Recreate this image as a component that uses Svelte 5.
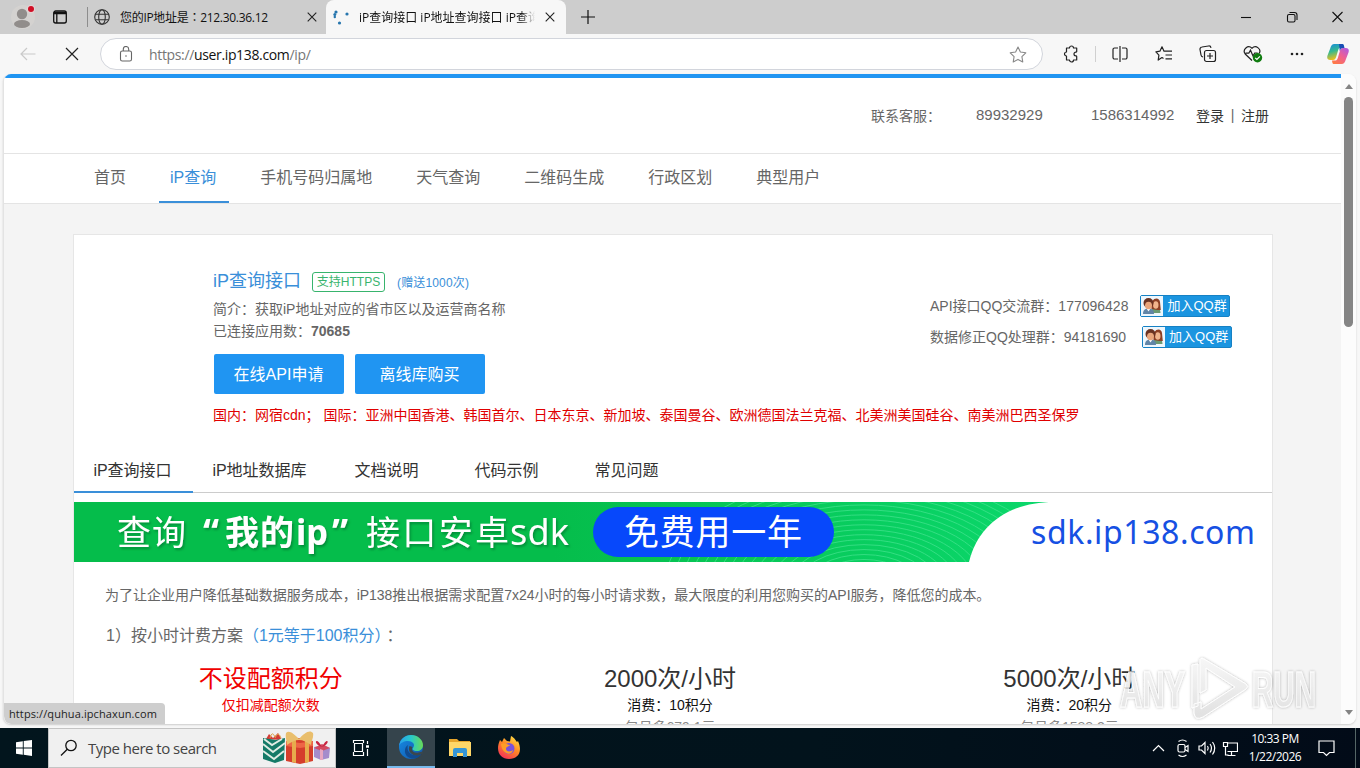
<script>
	const menu = ['首页', 'iP查询', '手机号码归属地', '天气查询', '二维码生成', '行政区划', '典型用户'];
	const tabs = ['iP查询接口', 'iP地址数据库', '文档说明', '代码示例', '常见问题'];
	const groups = [
		{ label: 'API接口QQ交流群：', number: '177096428' },
		{ label: '数据修正QQ处理群：', number: '94181690' }
	];
	const plans = [
		{ name: '不设配额积分', cost: '仅扣减配额次数', price: '', free: true },
		{ name: '2000次/小时', cost: '消费：10积分', price: '包月多679.1元' },
		{ name: '5000次/小时', cost: '消费：20积分', price: '包月多1588.2元' }
	];
	const rings = Array.from({ length: 22 }, (_, i) => 14 + i * 8);
</script>

<div class="window">
	<div class="tabstrip">
		<svg class="avatar" width="30" height="34" viewBox="0 0 30 34">
			<circle cx="15" cy="17" r="12" fill="#d4d2d0" />
			<circle cx="14" cy="14" r="5.2" fill="#918d8b" />
			<ellipse cx="14" cy="24" rx="8" ry="4" fill="#918d8b" />
			<circle cx="23" cy="9" r="4" fill="#e6d3d3" />
			<circle cx="23" cy="9" r="3" fill="#d00f26" />
		</svg>
		<svg class="actions" width="16" height="16" viewBox="0 0 16 16" fill="none" stroke="#111" stroke-width="1.3">
			<rect x="1.7" y="2" width="12.6" height="12" rx="2" />
			<path d="M2 3.3h12M2 4.6h12M4.800 5v9" />
		</svg>
		<i class="sep"></i>
		<div class="tab first">
			<svg width="16" height="16" viewBox="0 0 16 16" fill="none" stroke="#333" stroke-width="1.1">
				<circle cx="8" cy="8" r="7.3" />
				<ellipse cx="8" cy="8" rx="3.3" ry="7.3" />
				<path d="M1.5 5.3h13M1.5 10.7h13" />
			</svg>
			<span class="title">您的IP地址是：212.30.36.12</span>
			<svg class="x" width="10" height="10" viewBox="0 0 10 10" stroke="#222" stroke-width="1.1"><path d="M.7.7l8.6 8.6M9.3.7L.7 9.3" /></svg>
		</div>
		<div class="tab active">
			<svg width="16" height="16" viewBox="0 0 16 16" fill="#2776ae">
				<circle cx="3" cy="3" r="1.6" /><circle cx="1.8" cy="5.5" r="1.5" /><circle cx="1.8" cy="8" r="1.2" />
				<circle cx="14" cy="5" r="1.6" /><circle cx="6.5" cy="14" r="1.6" />
			</svg>
			<span class="title fade">iP查询接口 iP地址查询接口 iP查询</span>
			<svg class="x" width="10" height="10" viewBox="0 0 10 10" stroke="#222" stroke-width="1.1"><path d="M.7.7l8.6 8.6M9.3.7L.7 9.3" /></svg>
		</div>
		<svg class="plus" width="14" height="14" viewBox="0 0 14 14" stroke="#111" stroke-width="1.2"><path d="M7 0v14M0 7h14" /></svg>
		<svg class="controls" width="102" height="12" viewBox="0 0 102 12" fill="none" stroke="#111" stroke-width="1.1">
			<path d="M0 6.5h10" />
			<rect x="46.5" y="3.5" width="7.5" height="7.5" rx="1.5" />
			<path d="M48.5 1.5h5a2.5 2.5 0 0 1 2.5 2.5v5" />
			<path d="M91.5 1l10 10M101.5 1l-10 10" />
		</svg>
	</div>

	<div class="toolbar">
		<svg class="back" width="16" height="14" viewBox="0 0 16 14" fill="none" stroke="#c9c9c9" stroke-width="1.2"><path d="M15.5 7H1M7 1L1 7l6 6" /></svg>
		<svg class="stop" width="14" height="14" viewBox="0 0 14 14" stroke="#222" stroke-width="1.2"><path d="M1 1l12 12M13 1L1 13" /></svg>
		<div class="address">
			<svg width="14" height="16" viewBox="0 0 14 16" fill="none" stroke="#666" stroke-width="1.1">
				<rect x="1.5" y="5" width="11" height="10" rx="1.8" />
				<path d="M4.3 5V3.2a2.7 2.7 0 0 1 5.4 0V5" />
				<circle cx="7" cy="10" r=".8" fill="#666" stroke="none" />
			</svg>
			<span class="url">https://<b>user.ip138.com</b>/ip/</span>
			<svg class="star" width="18" height="17" viewBox="0 0 18 17" fill="none" stroke="#888" stroke-width="1.1" stroke-linejoin="round"><path d="M9 1l2.400 5 5.400.8-3.900 3.800.9 5.400L9 13.400 4.200 16l.9-5.400L1.200 6.800 6.600 6z" /></svg>
		</div>
		<div class="tools">
			<svg width="18" height="18" viewBox="0 0 18 18" fill="none" stroke="#222" stroke-width="1.2" stroke-linejoin="round"><path d="M4.500 3h3a2 2 0 0 1 4 0h3.200v3.500a.8.8 0 0 1-.8.6 1.900 1.900 0 1 0 0 3.800c.5 0 .8.200.8.600V15h-3.200a2 2 0 0 1-4 0H4.500v-4A2 2 0 1 1 4.500 7z" /></svg>
			<i class="bar"></i>
			<svg width="18" height="18" viewBox="0 0 18 18" fill="none" stroke="#222" stroke-width="1.200"><path d="M7 3H3.500A1.500 1.500 0 0 0 2 4.500v8A1.500 1.500 0 0 0 3.500 14H7M11 3h3.500A1.500 1.500 0 0 1 16 4.500v8a1.500 1.500 0 0 1-1.500 1.500H11M9 1v16" /></svg>
			<svg width="18" height="18" viewBox="0 0 18 18" fill="none" stroke="#222" stroke-width="1.200" stroke-linejoin="round"><path d="M10.500 6.200H9L7 1.800 4.900 6.200.9 6.800l3 3.300-.7 5L7 12.600l1.500 1M10.500 6.200H17M10.500 10H17M10.500 13.800H17" /></svg>
			<svg width="18" height="18" viewBox="0 0 18 18" fill="none" stroke="#222" stroke-width="1.200"><path d="M4 12A2.500 2.500 0 0 1 2 10L1 4.500A2.200 2.200 0 0 1 3 2l6.500-1a2.200 2.200 0 0 1 2.500 1.800" /><rect x="5.500" y="5.500" width="11" height="11" rx="2" /><path d="M11 8v6M8 11h6" /></svg>
			<svg width="20" height="18" viewBox="0 0 20 18" fill="none" stroke="#222" stroke-width="1.200">
				<path d="M9 15.500L2.200 9C-1 4.500 5-.7 9 3.200 13-.7 19 4.500 16 8.500M2.500 8.200h3.300L7.500 5.200 10 11l1.700-3h3" />
				<circle cx="14.500" cy="12.800" r="4.700" fill="#107c10" stroke="none" />
				<path d="M12.200 12.800l1.700 1.700 3-3.200" stroke="#fff" />
			</svg>
			<svg width="18" height="18" viewBox="0 0 18 18" fill="#222"><circle cx="3" cy="9" r="1.300" /><circle cx="8" cy="9" r="1.300" /><circle cx="13" cy="9" r="1.300" /></svg>
		</div>
		<svg class="copilot" width="22" height="22" viewBox="0 0 22 22">
			<defs>
				<linearGradient id="cpA" x1="0" y1="0" x2=".3" y2="1"><stop offset="0" stop-color="#1689e0" /><stop offset=".5" stop-color="#35b990" /><stop offset="1" stop-color="#f3bf1b" /></linearGradient>
				<linearGradient id="cpB" x1="1" y1="0" x2=".2" y2="1"><stop offset="0" stop-color="#a85be9" /><stop offset=".5" stop-color="#ee6094" /><stop offset="1" stop-color="#ff7a45" /></linearGradient>
			</defs>
			<path d="M15.500 1H7.500C5 1 3.900 3 3.200 5.500L.5 12.500C-.4 15.600.8 17 3.200 17H6c2 0 2.600-1.200 3.200-3.200l2-6.800C11.900 5 12.500 4.500 14 4.500h3C16.700 2.500 16.400 1 15.500 1z" fill="url(#cpA)" />
			<path d="M6.500 21h8c2.500 0 3.600-2 4.300-4.500l2.700-7c.9-3.100-.3-4.500-2.700-4.500H16c-2 0-2.600 1.200-3.200 3.200l-2 6.800C10.100 17 9.500 17.500 8 17.500H5c.3 2 .6 3.500 1.500 3.500z" fill="url(#cpB)" />
			<path d="M12 1h3.500c1 0 1.500 1.500 2 4H16c-2 0-2.600 1-3.200 3.200z" fill="#184eb5" />
		</svg>
	</div>

	<div class="viewport">
		<div class="page">
			<header>
				<span class="service">联系客服：</span>
				<span class="phone">89932929</span>
				<span class="phone second">1586314992</span>
				<span class="login">登录</span><span class="pipe">|</span><span class="login">注册</span>
			</header>
			<nav>
				{#each menu as item, i}
					<a class:on={i === 1}>{item}</a>
				{/each}
			</nav>
			<main>
				<section class="info">
					<div class="summary">
						<h1><span>iP查询接口</span><span class="badge">支持HTTPS</span><small>(赠送1000次)</small></h1>
						<p>简介：获取iP地址对应的省市区以及运营商名称</p>
						<p>已连接应用数：<b>70685</b></p>
						<div class="buttons"><button>在线API申请</button><button>离线库购买</button></div>
						<p class="nodes">国内：网宿cdn； 国际：亚洲中国香港、韩国首尔、日本东京、新加坡、泰国曼谷、欧洲德国法兰克福、北美洲美国硅谷、南美洲巴西圣保罗</p>
					</div>
					<div class="groups">
						{#each groups as group}
							<div class="group">
								<span>{group.label}{group.number}</span>
								<div class="join">
									<svg width="22" height="20" viewBox="0 0 22 20">
										<rect width="22" height="20" fill="#eef7fd" />
										<path d="M10 17c0-4 2-5.500 5-5.500s4.500 2 4.500 5.500z" fill="#6c9a72" />
										<path d="M10.500 13C8.500 1 18.500 0 19 6l.8 8h-3z" fill="#8c3f24" />
										<ellipse cx="14.800" cy="9" rx="2.700" ry="3.800" fill="#f0b48c" />
										<path d="M2 18c0-4 2-5.500 5.500-5.500S13 14 13 18z" fill="#6185a7" />
										<path d="M5.500 12.500l2 3 2-3z" fill="#fff" />
										<circle cx="7.500" cy="7" r="5" fill="#693222" />
										<ellipse cx="7.500" cy="9.500" rx="3.500" ry="3.800" fill="#e9a67c" />
									</svg>
									<span>加入QQ群</span>
								</div>
							</div>
						{/each}
					</div>
				</section>

				<div class="tabs">
					{#each tabs as tab, i}
						<a class:on={i === 0}>{tab}</a>
					{/each}
				</div>

				<svg class="banner" width="1198" height="60" viewBox="0 0 1198 60">
					<defs>
						<linearGradient id="green"><stop offset=".4" stop-color="#05bd4b" /><stop offset=".82" stop-color="#0bd86c" /></linearGradient>
						<filter id="shade" x="-5%" y="-10%" width="110%" height="130%"><feDropShadow dx="1.500" dy="2" stdDeviation="1" flood-color="#006c2c" flood-opacity=".6" /></filter>
					</defs>
					<rect width="1198" height="60" fill="url(#green)" />
					<g fill="none" stroke="#4be594" stroke-width="1" opacity=".65">
						{#each rings as r}
							<ellipse cx="790" cy="86" rx={r * 1.1} ry={r * 0.62} />
						{/each}
					</g>
					<path d="M895 60C904 22 936 0 980 0h218v60z" fill="#fff" />
					<rect x="519" y="5" width="241" height="50" rx="25" fill="#0748fb" />
					<g fill="#fff" filter="url(#shade)" font-size="34">
						<text x="43" y="43" textLength="69">查询</text>
						<g font-weight="700">
							<text class="latin" x="129" y="43" font-size="36">“</text>
							<text x="151" y="43" textLength="69">我的</text>
							<text class="latin" x="222" y="43" font-size="36" textLength="32" lengthAdjust="spacingAndGlyphs">ip</text>
							<text class="latin" x="258" y="43" font-size="36">”</text>
						</g>
						<text x="292" y="43" textLength="143">接口安卓</text>
						<text class="latin" x="436" y="43" font-size="36" textLength="59">sdk</text>
					</g>
					<text x="550" y="43" font-size="35" fill="#fff" textLength="178">免费用一年</text>
					<text class="latin" x="957" y="42" font-size="32" fill="#1650e3" textLength="224">sdk.ip138.com</text>
				</svg>

				<p class="intro">为了让企业用户降低基础数据服务成本，iP138推出根据需求配置7x24小时的每小时请求数，最大限度的利用您购买的API服务，降低您的成本。</p>
				<p class="scheme">1）按小时计费方案<em>（1元等于100积分）</em>：</p>
				<div class="plans">
					{#each plans as plan}
						<div class="plan" class:free={plan.free}>
							<h2>{plan.name}</h2>
							<p>{plan.cost}</p>
							<p class="price">{plan.price}</p>
						</div>
					{/each}
				</div>
			</main>
		</div>
		<div class="scroll">
			<i class="up"></i>
			<i class="thumb"></i>
			<i class="down"></i>
		</div>
		<div class="status">https://quhua.ipchaxun.com</div>
		<svg class="watermark" width="204" height="70" viewBox="0 0 204 70">
			<defs>
				<linearGradient id="mark" x1="0" y1="0" x2="0" y2="1"><stop offset="0" stop-color="#f6f6f6" /><stop offset="1" stop-color="#dcdcdc" /></linearGradient>
				<filter id="halo" x="-5%" y="-10%" width="110%" height="120%"><feDropShadow dx="0" dy="0" stdDeviation="1.400" flood-color="#000" flood-opacity=".35" /></filter>
			</defs>
			<g class="mark" fill="url(#mark)" stroke="#fff" stroke-width="1" filter="url(#halo)" opacity=".85">
				<text x="4" y="53" textLength="65" lengthAdjust="spacingAndGlyphs">ANY</text>
				<text x="136" y="53" textLength="64" lengthAdjust="spacingAndGlyphs">RUN</text>
				<path d="M76 11l6-1V52l-6 2zM84 7q0-4 4-2l42 25q3 3 0 5L87 63q-8 4-9-4V50l7-2v7l34-22-29-19v22l-6 3z" />
			</g>
		</svg>
	</div>

	<div class="taskbar">
		<div class="start">
			<svg width="16" height="16" viewBox="0 0 16 16" fill="#fff"><path d="M0 2.200L6.800 1.200v6.300H0zM7.700 1.100L16 0v7.500H7.700zM0 8.400h6.800v6.300L0 13.800zM7.700 8.400H16V16l-8.300-1.200z" /></svg>
		</div>
		<div class="search">
			<svg width="18" height="18" viewBox="0 0 18 18" fill="none" stroke="#111" stroke-width="1.300"><circle cx="11" cy="6.500" r="5.200" /><path d="M7.300 10.200L1 16.500" /></svg>
			<span>Type here to search</span>
			<svg class="gifts" width="70" height="36" viewBox="0 0 70 36">
				<path d="M4 9l3-5 4 4 5-5 4 7z" fill="#d23b36" />
				<path d="M8 8q2-8 5-1M13 8q3-8 6 0" fill="none" stroke="#dba34c" />
				<path d="M1 8l13 2 9-2-1 22-9 3-12-4z" fill="#147a67" />
				<path d="M1 14l10 8 12-9M1 21l11 8 10-8M2 9l8 6 10-6" fill="none" stroke="#dfece3" stroke-width="2" />
				<path d="M24 11l13-3 14 3v20l-13 3-14-3z" fill="#d53e2c" />
				<path d="M24 11l14 2 13-2v5l-13 2-14-2z" fill="#ee6646" />
				<path d="M30 9h4v24l-4-1zM43 10h4v22l-4 1z" fill="#e7ac4c" />
				<path d="M37 9C31 3 27 0 24 3c-1 5 1 8 1 12 4-3 8-5 12-5 4 0 8 2 12 5 0-4 3-7 2-12-3-4-9 0-14 6z" fill="#e9be6c" />
				<path d="M52 17l8-2 8 3-1 10-8 2-7-3z" fill="#a58ccb" />
				<path d="M52 18l8-4 8 4-8 3z" fill="#d34a60" />
				<path d="M58 19l3 1v10h-3z" fill="#e8a7c1" />
				<path d="M60 17c-6-12-10-3 0 0 9-3 6-12 0 0z" fill="#c82440" />
			</svg>
		</div>
		<div class="app">
			<svg width="18" height="18" viewBox="0 0 18 18" fill="none" stroke="#fff" stroke-width="1.200"><path d="M1 1.500h10M1 16.500h10M2.500 4.500h8v8h-8zM1.500 1v3M11.500 1v3M1.500 13v4M11.500 13v4M15.500 2v3M15.500 10v7" /><path d="M14 7.500h3" stroke-width="2.500" /></svg>
		</div>
		<div class="app current">
			<svg width="24" height="24" viewBox="0 0 24 24">
				<defs>
					<linearGradient id="edgeTop"><stop offset="0" stop-color="#299eee" /><stop offset=".5" stop-color="#28c9ca" /><stop offset="1" stop-color="#69db55" /></linearGradient>
					<linearGradient id="edgeLow" x1="0" y1="0" x2="1" y2="1"><stop offset="0" stop-color="#178ce5" /><stop offset="1" stop-color="#1055a9" /></linearGradient>
				</defs>
				<circle cx="12" cy="12" r="12" fill="url(#edgeLow)" />
				<path d="M0 11C1 4 6 0 12 0c7 0 12 5 12 10 0 4-3 6-6 6-4 0-5-2-4-3 3-4-1-7-5-7-4 0-8 2-9 5z" fill="url(#edgeTop)" />
				<path d="M9 10c-2 6 3 11 9 10l5-2c-4 8-16 7-17-1-.4-3 1-6 3-7z" fill="#104b91" />
				<path d="M13.500 12c-2 4 2 6.500 6 5.500l4-1 .8 1.500-3.800 2C14 22 8 17 10.500 11z" fill="#3b474d" />
			</svg>
		</div>
		<div class="app">
			<svg width="22" height="20" viewBox="0 0 22 20"><path d="M0 1h8l2 2h11v4H0z" fill="#e7a52b" /><path d="M0 4h22v14H0z" fill="#ffd768" /><path d="M4 12q0-2 2-2h10q2 0 2 2v7h-4v-4H8v4H4z" fill="#3696d5" /></svg>
		</div>
		<div class="app">
			<svg width="24" height="24" viewBox="0 0 24 24">
				<defs><linearGradient id="fox" x1=".8" y1="0" x2=".2" y2="1"><stop offset="0" stop-color="#ffdf45" /><stop offset=".45" stop-color="#ff8b24" /><stop offset="1" stop-color="#f42b59" /></linearGradient></defs>
				<path d="M3 4l2 2 2-4 3 3 3 .5L14 0c4 2 5 5 6 6l1-1c5 11 0 18-9 18S-2 15 3 4z" fill="url(#fox)" />
				<circle cx="12" cy="12.500" r="5.500" fill="#7852db" />
				<path d="M4 8c4-2 6 1 9 1-1 2-4 1-4 4 0 3 5 3 7 1-1 6-11 5-12-6z" fill="#ff9d25" />
			</svg>
		</div>
		<div class="tray">
			<svg width="86" height="20" viewBox="0 0 86 20" fill="none" stroke="#fff" stroke-width="1.200">
				<path d="M1 13l5.500-5.500L12 13" />
				<rect x="26" y="6.500" width="7" height="7.500" rx="1.500" />
				<path d="M33 9.500l3-2v6l-3-2M26.500 3.500q4-3 8 0M26.500 17q4 3 8 0" />
				<path d="M47 8h2.500L53 4.500v11L49.500 12H47zM55.500 8q1.500 2 0 4.500M58 6q3 4 0 8.500M60.500 4q4.500 6 0 12.500" />
				<path d="M75 5h11M85.500 5v8.500H75.500M79.500 14v3.500M75.500 17.500h8M71.500 4.500h4v4h-4zM73.500 8.500v8.500h3" />
			</svg>
			<div class="clock"><span>10:33 PM</span><span>1/22/2026</span></div>
			<svg width="17" height="17" viewBox="0 0 17 17" fill="none" stroke="#fff" stroke-width="1.200"><path d="M1 1h15v11.500h-4.500l-3 3-3-3H1z" /></svg>
			<i class="desk"></i>
		</div>
	</div>
</div>

<style>
	:global(body) {
		margin: 0;
	}
	* {
		box-sizing: border-box;
	}
	svg {
		flex: none;
	}
	p,
	h1,
	h2 {
		margin: 0;
		font-weight: 400;
	}
	.window {
		width: 1360px;
		height: 768px;
		overflow: hidden;
		display: flex;
		flex-direction: column;
		background: #f7f7f7;
		font-family: 'Liberation Sans', 'Noto Sans CJK SC', sans-serif;
		white-space: nowrap;
	}

	.tabstrip {
		height: 34px;
		background: #cdcdcd;
		display: flex;
		align-items: center;
		padding-left: 8px;
		font-family: 'Open Sans', 'Noto Sans CJK TC', sans-serif;
		font-size: 12px;
		color: #111;
	}
	.actions {
		margin-left: 14px;
	}
	.sep {
		width: 1px;
		height: 20px;
		background: #8d8d8d;
		margin-left: 19px;
	}
	.tab {
		height: 34px;
		display: flex;
		align-items: center;
		gap: 10px;
	}
	.first {
		width: 238px;
		padding: 0 9px 0 6px;
	}
	.first .title {
		letter-spacing: -0.3px;
	}
	.active {
		width: 240px;
		padding: 0 11px 0 7px;
		background: #f7f7f7;
		border-radius: 8px 8px 0 0;
	}
	.x {
		margin-left: auto;
	}
	.fade {
		width: 178px;
		overflow: hidden;
		mask-image: linear-gradient(90deg, #000 92%, transparent);
	}
	.plus {
		margin-left: 15px;
	}
	.controls {
		margin: 0 17px 0 auto;
	}

	.toolbar {
		height: 40px;
		display: flex;
		align-items: center;
		background: #f7f7f7;
	}
	.back {
		margin-left: 20px;
	}
	.stop {
		margin-left: 29px;
	}
	.address {
		width: 943px;
		height: 32px;
		margin-left: 21px;
		padding: 0 15px 0 18px;
		display: flex;
		align-items: center;
		background: #fff;
		border: 1px solid #d2d5dc;
		border-radius: 16px;
	}
	.url {
		margin-left: 16px;
		font: 14px 'Open Sans', sans-serif;
		color: #767676;
		letter-spacing: -0.35px;
	}
	.url b {
		font-weight: 400;
		color: #111;
	}
	.star {
		margin-left: auto;
	}
	.tools {
		display: flex;
		align-items: center;
		gap: 26px;
		margin-left: 19px;
	}
	.bar {
		width: 1px;
		height: 16px;
		background: #d0d0d0;
		margin: 0 -11px;
	}
	.copilot {
		margin: 0 0 0 20px;
	}

	.viewport {
		position: relative;
		height: 650px;
		margin: 0 4px 4px 3px;
		display: flex;
		border-left: 1px solid #e3e3e3;
		border-radius: 8px;
		overflow: hidden;
		background: #fcfcfc;
		box-shadow: 0 1px 2px #ccc;
	}
	.page {
		width: 1337px;
		border-top: 4px solid #2095f2;
		background: #f4f4f4;
		display: flex;
		flex-direction: column;
	}
	header {
		height: 76px;
		flex: none;
		background: #fff;
		border-bottom: 1px solid #e4e4e4;
		padding: 0 0 2px 867px;
		display: flex;
		align-items: center;
		font-size: 14px;
		color: #666;
	}
	.service {
		width: 105px;
	}
	.phone {
		font-size: 15px;
		width: 115px;
	}
	.second {
		width: 105px;
	}
	.login {
		color: #333;
	}
	.pipe {
		width: 17px;
		text-align: center;
	}
	nav {
		height: 50px;
		flex: none;
		background: #fff;
		border-bottom: 1px solid #e4e4e4;
		padding-left: 79px;
		display: flex;
		gap: 20px;
		font-size: 16px;
		line-height: 48px;
		color: #666;
	}
	nav a {
		padding: 0 13px 0 11px;
		height: 49px;
	}
	nav .on {
		color: #3a8fd9;
		border-bottom: 2px solid #3a8fd9;
	}
	main {
		width: 1200px;
		height: 600px;
		flex: none;
		margin: 30px 0 0 69px;
		background: #fff;
		border: 1px solid #e6e6e6;
	}
	.info {
		height: 213px;
		padding: 36px 0 0 139px;
		display: flex;
		font-size: 14px;
		color: #666;
	}
	.summary {
		width: 717px;
	}
	h1 {
		display: flex;
		align-items: center;
		height: 22px;
		font-size: 18px;
		line-height: 22px;
		color: #3a8fd9;
	}
	h1 span:first-child {
		padding-bottom: 3px;
	}
	.badge {
		margin-left: 11px;
		height: 20px;
		width: 73px;
		text-align: center;
		font-size: 12px;
		line-height: 18px;
		color: #38b46d;
		border: 1px solid #38b46d;
		border-radius: 3px;
	}
	small {
		font-size: 12px;
		letter-spacing: 0.15px;
		margin: 1px 0 0 12px;
	}
	.summary p {
		height: 22px;
		line-height: 22px;
	}
	h1 + p {
		margin-top: 5px;
	}
	.buttons {
		display: flex;
		gap: 11px;
		margin: 12px 0 10px 1px;
	}
	button {
		width: 130px;
		height: 40px;
		padding: 0 1px 3px 0;
		border: 0;
		border-radius: 2px;
		background: #2095f2;
		color: #fff;
		font: inherit;
		font-size: 16px;
	}
	.summary .nodes {
		color: #e00000;
	}
	.groups {
		padding-top: 24px;
	}
	.group {
		display: flex;
		align-items: center;
		gap: 12px;
		height: 22px;
		margin-bottom: 9px;
	}
	.group > span {
		padding-bottom: 3px;
	}
	.group + .group {
		gap: 16px;
	}
	.join {
		width: 90px;
		height: 22px;
		display: flex;
		align-items: center;
		border: 1px solid #1681c4;
		border-radius: 2px;
		background: #1b95e0;
		color: #fff;
		font-size: 13px;
	}
	.join span {
		margin-left: 4px;
		padding-bottom: 3px;
	}

	.tabs {
		height: 45px;
		display: flex;
		border-bottom: 1px solid #ccc;
		font-size: 16px;
		line-height: 46px;
		color: #333;
	}
	.tabs a {
		width: 120px;
		height: 45px;
		padding-right: 1px;
		text-align: center;
	}
	.tabs a:nth-child(2) {
		width: 134px;
	}
	.tabs .on {
		width: 119px;
		padding-right: 2px;
		border-bottom: 2px solid #3a8fd9;
	}
	.banner {
		display: block;
		margin-top: 9px;
		font-family: 'Noto Sans CJK SC', sans-serif;
	}
	.latin {
		font-family: 'Noto Sans', sans-serif;
	}
	.intro {
		margin: 22px 0 0 31px;
		font-size: 14px;
		line-height: 22px;
		letter-spacing: -0.02px;
		color: #666;
	}
	.scheme {
		margin: 18px 0 0 32px;
		font-size: 16px;
		line-height: 24px;
		color: #666;
	}
	em {
		font-style: normal;
		color: #3a8fd9;
		margin-right: 4px;
	}
	.plans {
		display: flex;
		margin: 16px 3px 0 -3px;
		text-align: center;
	}
	.plan {
		flex: 1;
		font-size: 14px;
		line-height: 22px;
		color: #111;
	}
	h2 {
		font-size: 24px;
		line-height: 30px;
		color: #333;
	}
	.free,
	.free h2 {
		color: #f00000;
	}
	.price {
		color: #888;
	}

	.scroll {
		width: 15px;
		display: flex;
		flex-direction: column;
		align-items: center;
		padding: 10px 0 9px;
		background: #fcfcfc;
	}
	.up,
	.down {
		border: 4.500px solid transparent;
		border-top: 0;
		border-bottom: 5px solid #858585;
	}
	.thumb {
		width: 9px;
		height: 230px;
		margin-top: 8px;
		border-radius: 5px;
		background: #858585;
	}
	.down {
		margin-top: auto;
		transform: rotate(180deg);
	}
	.status {
		position: absolute;
		left: 0;
		bottom: 0;
		width: 161px;
		height: 21px;
		padding-left: 5px;
		background: #cecece;
		border-radius: 0 4px 0 7px;
		font: 11px/21px 'Open Sans', sans-serif;
		letter-spacing: 0.1px;
		color: #222;
	}
	.watermark {
		position: absolute;
		left: 1112px;
		bottom: 0;
	}
	.mark {
		font: 700 50px 'Liberation Sans', sans-serif;
	}

	.taskbar {
		height: 40px;
		display: flex;
		background: linear-gradient(90deg, #02151d, #02131c 60%, #020b18);
		color: #fff;
		font-family: 'Open Sans', sans-serif;
	}
	.start,
	.app {
		width: 48px;
		display: flex;
		align-items: center;
		justify-content: center;
	}
	.app {
		width: 49px;
	}
	.current {
		width: 48px;
		background: #35444c;
		border-bottom: 2px solid #76b9ed;
		margin-left: 2px;
	}
	.search {
		width: 288px;
		display: flex;
		align-items: center;
		padding-left: 11px;
		background: #f0f0f0;
		border: 1px solid #c4c4c4;
		color: #444;
		font-size: 15px;
	}
	.search span {
		width: 163px;
		margin-left: 10px;
		letter-spacing: -0.5px;
	}
	.gifts {
		margin-left: 11px;
	}
	.tray {
		margin-left: auto;
		display: flex;
		align-items: center;
	}
	.clock {
		width: 74px;
		margin-right: 6px;
		display: flex;
		flex-direction: column;
		align-items: center;
		font-size: 12px;
		line-height: 18px;
		letter-spacing: -0.5px;
	}
	.desk {
		width: 1px;
		height: 40px;
		margin: 0 4px 0 20px;
		background: #566;
	}
</style>
